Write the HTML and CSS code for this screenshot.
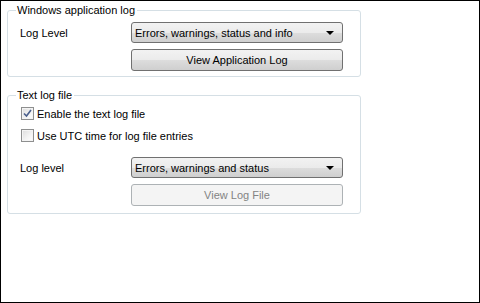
FILE: index.html
```html
<!DOCTYPE html>
<html lang="en">
  <head>
    <meta charset="UTF-8" />
    <title>Logging Options</title>
    <link rel="stylesheet" href="styles.css">
  </head>
  <body>
    <div class="panel">
      <fieldset class="group group-app">
        <legend>Windows application log</legend>
        <div class="row">
          <span class="label">Log Level</span>
          <div class="combo">
            <span>Errors, warnings, status and info</span>
            <i class="arrow"></i>
          </div>
        </div>
        <div class="row">
          <span class="label"></span>
          <button class="btn">View Application Log</button>
        </div>
      </fieldset>

      <fieldset class="group group-text">
        <legend>Text log file</legend>
        <label class="check">
          <span class="box checked">
            <svg width="9" height="9" viewBox="0 0 9 9">
              <path d="M1 4.5 L3.5 7 L8 1" fill="none" stroke="#4a5f8c" stroke-width="1.6" />
            </svg>
          </span>
          Enable the text log file
        </label>
        <label class="check">
          <span class="box"></span>
          Use UTC time for log file entries
        </label>
        <div class="row row-level">
          <span class="label">Log level</span>
          <div class="combo">
            <span>Errors, warnings and status</span>
            <i class="arrow"></i>
          </div>
        </div>
        <div class="row">
          <span class="label"></span>
          <button class="btn" disabled>View Log File</button>
        </div>
      </fieldset>
    </div>
  </body>
</html>
```

FILE: styles.css
```css
* {
  margin: 0;
  padding: 0;
  box-sizing: border-box;
}

body {
  font-family: Tahoma, "Liberation Sans", Arial, sans-serif;
  font-size: 11px;
  color: #000000;
  background: #ffffff;
}

.panel {
  width: 480px;
  height: 303px;
  border: 1px solid #000000;
  padding: 3px 0 0 6px;
}

.group {
  width: 354px;
  border: 1px solid #d5dfe5;
  border-radius: 3px;
  padding: 0 16px 5px 12px;
}

.group legend {
  margin-left: -4px;
  padding: 0 2px 0 1px;
  line-height: 13px;
}

.group-app {
  padding-top: 5px;
}

.group-text {
  margin-top: 12px;
  padding-top: 5px;
  padding-bottom: 7px;
}

.row {
  display: grid;
  grid-template-columns: 111px 212px;
  align-items: center;
  margin-bottom: 6px;
}

.row:last-child {
  margin-bottom: 0;
}

.combo {
  height: 21px;
  border: 1px solid #707070;
  border-radius: 3px;
  background: linear-gradient(#f2f2f2 0%, #ebebeb 50%, #dddddd 51%, #cfcfcf 100%);
  display: flex;
  align-items: center;
  justify-content: space-between;
  padding: 0 8px 0 3px;
}

.arrow {
  width: 0;
  height: 0;
  border-left: 4px solid transparent;
  border-right: 4px solid transparent;
  border-top: 4px solid #000000;
}

.btn {
  height: 22px;
  font: inherit;
  color: #000000;
  border: 1px solid #707070;
  border-radius: 3px;
  background: linear-gradient(#f2f2f2 0%, #ebebeb 50%, #dddddd 51%, #cfcfcf 100%);
}

.btn:disabled {
  color: #838383;
  border-color: #adb2b5;
  background: #f4f4f4;
}

.check {
  display: flex;
  align-items: center;
  gap: 3px;
  height: 13px;
  margin: 0 0 9px 1px;
}

.box {
  width: 13px;
  height: 13px;
  border: 1px solid #8e8f8f;
  background: linear-gradient(135deg, #dcdcdc 0%, #f4f4f4 60%, #ffffff 100%);
  box-shadow: inset 0 0 0 1px #f4f4f4;
  display: flex;
  align-items: center;
  justify-content: center;
}

.row-level {
  margin-top: 15px;
}
```
